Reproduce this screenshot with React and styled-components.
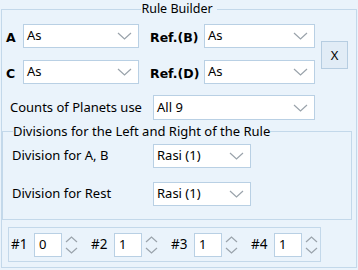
import React from 'react'
import styled, { createGlobalStyle } from 'styled-components'

const Global = createGlobalStyle`
	html, body {
		margin: 0;
		background: #eaf3fb;
	}
	body {
		font-family: 'Noto Sans', 'Open Sans', sans-serif;
		font-size: 13px;
		color: #000;
	}
`

const Chevron = () => (
	<svg width="15" height="8" viewBox="0 0 15 8">
		<polyline points="1,1 7.5,7 14,1" fill="none" stroke="#9aa3ab" strokeWidth="1.2" />
	</svg>
)

const Combo = ({ value, width, height = 24 }) => (
	<ComboBox style={{ width, height }}>
		<span>{value}</span>
		<Chevron />
	</ComboBox>
)

const Spin = ({ label, value }) => (
	<SpinItem>
		<span className="spin-label">{label}</span>
		<SpinInput>{value}</SpinInput>
		<SpinArrows>
			<svg width="13" height="20" viewBox="0 0 13 20">
				<polyline points="1,7 6.5,2 12,7" fill="none" stroke="#9aa3ab" strokeWidth="1.2" />
				<polyline points="1,13 6.5,18 12,13" fill="none" stroke="#9aa3ab" strokeWidth="1.2" />
			</svg>
		</SpinArrows>
	</SpinItem>
)

const App = () => (
	<>
		<Global />
		<Outer>
			<OuterLegend>Rule Builder</OuterLegend>
			<PairGrid>
				<Letter>A</Letter>
				<Combo value="As" width={116} />
				<RefLabel>Ref.(B)</RefLabel>
				<Combo value="As" width={111} />
				<CloseButton>X</CloseButton>
				<Letter>C</Letter>
				<Combo value="As" width={116} />
				<RefLabel>Ref.(D)</RefLabel>
				<Combo value="As" width={111} />
			</PairGrid>
			<CountsRow>
				<span>Counts of Planets use</span>
				<Combo value="All 9" width={162} height={25} />
			</CountsRow>
			<Inner>
				<InnerLegend>Divisions for the Left and Right of the Rule</InnerLegend>
				<DivRow>
					<span>Division for A, B</span>
					<Combo value="Rasi (1)" width={98} />
				</DivRow>
				<DivRow>
					<span>Division for Rest</span>
					<Combo value="Rasi (1)" width={98} />
				</DivRow>
			</Inner>
			<SpinBox>
				<Spin label="#1" value="0" />
				<Spin label="#2" value="1" />
				<Spin label="#3" value="1" />
				<Spin label="#4" value="1" />
			</SpinBox>
		</Outer>
	</>
)

export default App

const Outer = styled.fieldset`
	box-sizing: border-box;
	margin: 1px 0 0 1px;
	width: 356px;
	height: 267px;
	padding: 0;
	border: 1px solid #c3d8ea;
	min-width: 0;
`

const OuterLegend = styled.legend`
	margin: 0 auto;
	padding: 0 2px;
	line-height: 16px;
	font-size: 12.5px;
	transform: translateX(-2px);
`

const PairGrid = styled.div`
	display: grid;
	grid-template-columns: 17px 116px 65px 111px 33px;
	grid-template-rows: 24px 24px;
	row-gap: 12px;
	align-items: center;
	padding: 7px 0 0 4px;
`

const Letter = styled.span`
	font-family: 'DejaVu Sans', sans-serif;
	font-weight: bold;
	font-size: 12.5px;
	padding-top: 3px;
`

const RefLabel = styled.span`
	font-family: 'DejaVu Sans', sans-serif;
	font-weight: bold;
	font-size: 12.5px;
	padding: 3px 0 0 11px;
`

const CloseButton = styled.div`
	grid-column: 5;
	grid-row: 1 / span 2;
	justify-self: end;
	box-sizing: border-box;
	width: 27px;
	height: 28px;
	margin-top: 1px;
	display: flex;
	align-items: center;
	justify-content: center;
	background: #e1ecf6;
	border: 1px solid #b6cde1;
	font-size: 13px;
`

const ComboBox = styled.div`
	box-sizing: border-box;
	display: flex;
	align-items: center;
	justify-content: space-between;
	padding: 0 6px 0 3px;
	background: #fff;
	border: 1px solid #b9d0e4;
	font-size: 13px;
	span {
		margin-top: -2px;
	}
`

const CountsRow = styled.div`
	display: grid;
	grid-template-columns: 143px auto;
	align-items: center;
	margin-top: 11px;
	padding-left: 8px;
	white-space: nowrap;
	& > span {
		margin-top: -2px;
	}
`

const Inner = styled.fieldset`
	box-sizing: border-box;
	margin: 3px 4px 0 0;
	width: 350px;
	height: 97px;
	padding: 0;
	border: 1px solid #c3d8ea;
	min-width: 0;
`

const InnerLegend = styled.legend`
	margin-left: 10px;
	padding: 0;
	line-height: 16px;
	font-size: 13px;
`

const DivRow = styled.div`
	display: grid;
	grid-template-columns: 141px auto;
	align-items: center;
	padding-left: 9px;
	margin-top: 5px;
	white-space: nowrap;
	& > span {
		margin-top: -2px;
	}
	& + & {
		margin-top: 14px;
	}
`

const SpinBox = styled.div`
	box-sizing: border-box;
	display: flex;
	gap: 13px;
	align-items: center;
	margin: 7px 0 0 6px;
	width: 313px;
	height: 35px;
	padding-left: 2px;
	border: 1px solid #c3d8ea;
`

const SpinItem = styled.div`
	display: flex;
	align-items: center;
	.spin-label {
		font-size: 13.5px;
		width: 23px;
		margin-top: -2px;
	}
`

const SpinInput = styled.div`
	box-sizing: border-box;
	width: 28px;
	height: 24px;
	padding: 0 0 2px 4px;
	display: flex;
	align-items: center;
	background: #fff;
	border: 1px solid #b9d0e4;
	font-size: 13px;
`

const SpinArrows = styled.div`
	display: flex;
	align-items: center;
	padding-left: 3px;
`
